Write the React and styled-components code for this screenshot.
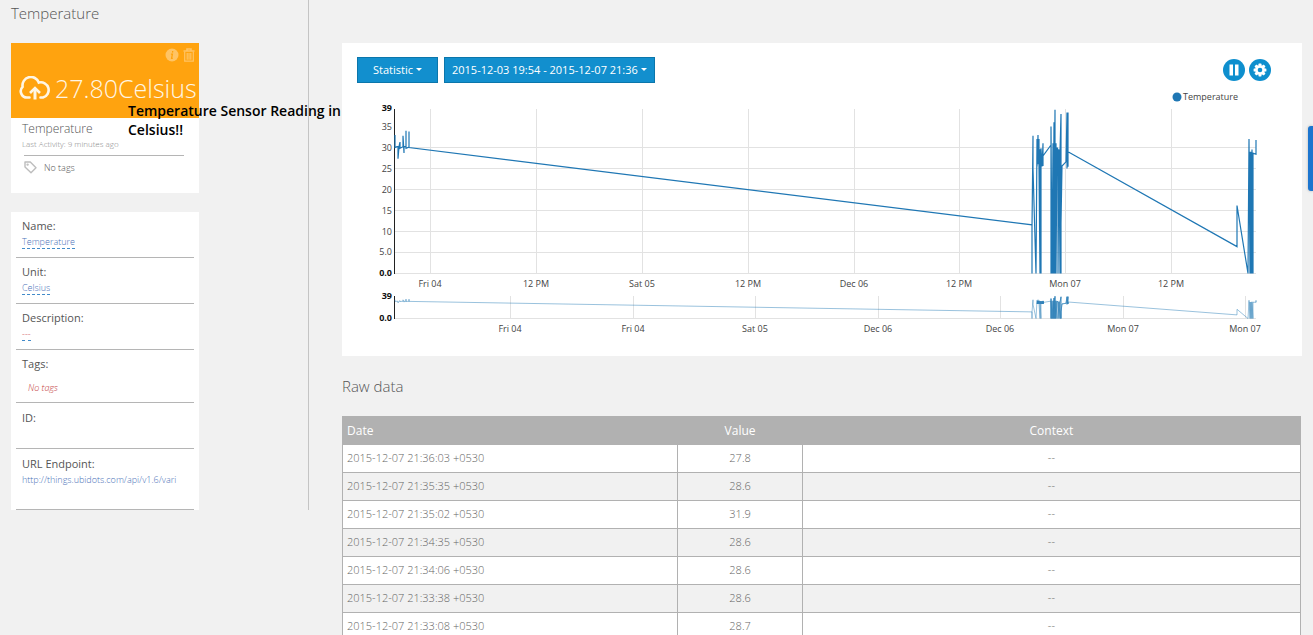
import React from "react";
import styled, { createGlobalStyle } from "styled-components";

const GlobalStyle = createGlobalStyle`
  * {
    box-sizing: border-box;
  }
  body {
    margin: 0;
    background: #f1f1f1;
    font-family: "Open Sans", "Noto Sans", sans-serif;
    font-weight: 300;
    color: #555;
  }
  button {
    font-family: inherit;
    cursor: pointer;
  }
`;

// chart samples: [px from the left of the plot, sensor value]
const samples = [
  [0, 33], [0, 30], [2, 30.2], [3, 30.2], [3, 27.3], [4, 30.2], [5, 31.3], [5, 29.8],
  [8, 30.2], [8, 32.8], [9, 28.7], [9, 30.2], [11, 30.2], [11, 34], [11, 29.8],
  [14, 30.1], [14, 33.8], [14, 30], [637, 11.6],
  [637, 0], [637, 11], [638, 32.8], [638, 25], [641, 0],
  [642, 32], [642, 25.5], [643, 33], [643, 26], [644, 32], [644, 25.5], [645, 0],
  [645, 29.6], [646, 0], [646, 29.8], [647, 25.5], [648, 31], [648, 25.6], [648, 28],
  [656, 30.6], [656, 0], [656, 35], [657, 0], [658, 31], [658, 0],
  [659, 36], [659, 0], [660, 39], [660, 0], [661, 31], [661, 0],
  [662, 30], [663, 29.5], [663, 0], [664, 29.5], [665, 0], [665, 29],
  [666, 38], [666, 0], [666, 12], [667, 25.6], [671, 26.6],
  [672, 38.3], [672, 25], [673, 38.3], [673, 25.4], [673, 29],
  [842, 6.4], [842, 16.2], [853, 0],
  [854, 32], [855, 0], [855, 29], [856, 0], [856, 29], [857, 0], [857, 29.5],
  [858, 0], [858, 28.8], [858, 28.6], [861, 28.4], [861, 31.8], [861, 28.4],
];
const burst = samples.filter(([x]) => x > 655 && x < 674);

const LEFT = 53;
const toLine = (points, bottom, scale) =>
  points.map(([x, v]) => `${x + LEFT},${(bottom - v * scale).toFixed(1)}`).join(" ");

const yTicks = [
  ["39", 22], ["35", 41], ["30", 62], ["25", 83], ["20", 104],
  ["15", 125], ["10", 146], ["5.0", 166], ["0.0", 187],
];
const gridLines = [59.5, 80.5, 101.5, 122.5, 143.5, 164.5, 185.5];
const xTicks = [
  ["Fri 04", 88], ["12 PM", 194], ["Sat 05", 300], ["12 PM", 406],
  ["Dec 06", 512], ["12 PM", 617], ["Mon 07", 723], ["12 PM", 829],
];
const contextTicks = [
  ["Fri 04", 168], ["Fri 04", 291], ["Sat 05", 413], ["Dec 06", 536],
  ["Dec 06", 658], ["Mon 07", 781], ["Mon 07", 903],
];

const rows = [
  ["2015-12-07 21:36:03 +0530", "27.8"],
  ["2015-12-07 21:35:35 +0530", "28.6"],
  ["2015-12-07 21:35:02 +0530", "31.9"],
  ["2015-12-07 21:34:35 +0530", "28.6"],
  ["2015-12-07 21:34:06 +0530", "28.6"],
  ["2015-12-07 21:33:38 +0530", "28.6"],
  ["2015-12-07 21:33:08 +0530", "28.7"],
];

const CloudIcon = () => (
  <svg width="32" height="24" viewBox="0 0 32 24" fill="none" stroke="#fff6e4" strokeWidth="2.6" aria-hidden="true">
    <path d="M10.5 21.5H8.5A6.3 6.3 0 0 1 3.6 10.8A8.4 8.4 0 0 1 19.8 6.6A7.6 7.6 0 1 1 24 21.5H21.5" strokeLinecap="round" />
    <path d="M16 23.5V13" strokeWidth="3" />
    <path d="M11 17L16 12L21 17" />
  </svg>
);

const InfoIcon = () => (
  <svg width="14" height="14" viewBox="0 0 14 14" aria-hidden="true">
    <circle cx="7" cy="7" r="6.5" fill="#ffc465" />
    <path d="M7.7 3L7.5 4.6M5.9 6.1H7.4L6.6 10.4H7.8" stroke="#ffa30f" strokeWidth="1.3" fill="none" />
  </svg>
);

const TrashIcon = () => (
  <svg width="12" height="14" viewBox="0 0 12 14" fill="none" stroke="#ffc465" aria-hidden="true">
    <path d="M0.5 3H11.5M4 2.8V1H8V2.8" strokeWidth="1.6" />
    <path d="M1.7 3.5V13.2H10.3V3.5M4.2 5V11.8M6 5V11.8M7.8 5V11.8" strokeWidth="1.2" />
  </svg>
);

const TagIcon = () => (
  <svg width="13" height="13" viewBox="0 0 13 13" fill="none" stroke="#bdbdbd" strokeWidth="1.4" aria-hidden="true">
    <path d="M1 1H6.3L12 6.7L7 11.8L1 6Z" strokeLinejoin="round" />
    <circle cx="3.6" cy="3.6" r="0.5" />
  </svg>
);

const PauseIcon = () => (
  <svg width="12" height="12" viewBox="0 0 12 12" fill="#fff" aria-hidden="true">
    <path d="M1.5 0.5H5V11.5H1.5ZM7 0.5H10.5V11.5H7Z" />
  </svg>
);

const GearIcon = () => (
  <svg width="14" height="14" viewBox="0 0 14 14" aria-hidden="true">
    <g fill="#fff">
      {[0, 45, 90, 135].map((a) => (
        <rect key={a} x="5.5" y="0.6" width="3" height="12.8" rx="0.6" transform={`rotate(${a} 7 7)`} />
      ))}
      <circle cx="7" cy="7" r="4.8" />
    </g>
    <circle cx="7" cy="7" r="2.3" fill="#0e8fce" />
  </svg>
);

const Chart = () => (
  <ChartSvg viewBox="0 0 960 256" role="img" aria-label="Temperature chart">
    <circle cx="835" cy="9" r="4.5" fill="#1f77b4" />
    <text x="841" y="12">Temperature</text>

    <g stroke="#e2e2e2" shapeRendering="crispEdges">
      {gridLines.map((y) => (
        <line key={y} x1={LEFT} x2="914" y1={y} y2={y} />
      ))}
      {xTicks.map(([, x]) => (
        <line key={x} x1={x + 0.5} x2={x + 0.5} y1="21" y2="186" />
      ))}
      <line x1={LEFT} x2="914" y1="230.5" y2="230.5" />
      {contextTicks.map(([, x]) => (
        <line key={x} x1={x + 0.5} x2={x + 0.5} y1="208" y2="230" />
      ))}
    </g>

    {yTicks.map(([label, y]) => (
      <text key={label} x="50" y={y + 1} textAnchor="end" className={label === "39" || label === "0.0" ? "edge" : ""}>
        {label}
      </text>
    ))}
    {xTicks.map(([label, x]) => (
      <text key={x} x={x} y="199" textAnchor="middle">{label}</text>
    ))}
    <path d="M52.5 21V186M52.5 208V231" stroke="#222" shapeRendering="crispEdges" />
    <polyline points={toLine(samples, 185.5, 4.2)} fill="none" stroke="#1f77b4" strokeWidth="1.2" />

    <text x="50" y="211" textAnchor="end" className="edge">39</text>
    <text x="50" y="233" textAnchor="end" className="edge">0.0</text>
    {contextTicks.map(([label, x]) => (
      <text key={x} x={x} y="244" textAnchor="middle">{label}</text>
    ))}
    <polyline points={toLine(samples, 230.5, 0.57)} fill="none" stroke="#1f77b4" opacity="0.45" />
    <polyline points={toLine(burst, 230.5, 0.57)} fill="none" stroke="#1f77b4" opacity="0.5" />
    <path d="M695 214.5H702" stroke="#1f77b4" strokeWidth="3" opacity="0.8" />
  </ChartSvg>
);

const App = () => {
  return (
    <Page>
      <GlobalStyle />
      <Sidebar>
        <Heading>Temperature</Heading>
        <Card>
          <Reading>
            <CardActions>
              <PlainButton aria-label="Info"><InfoIcon /></PlainButton>
              <PlainButton aria-label="Delete"><TrashIcon /></PlainButton>
            </CardActions>
            <Value>
              <CloudIcon />
              27.80Celsius
            </Value>
          </Reading>
          <Summary>
            <SensorName>Temperature</SensorName>
            <Activity>Last Activity: 9 minutes ago</Activity>
            <TagLine>
              <TagIcon />
              No tags
            </TagLine>
          </Summary>
          <Note>Temperature Sensor Reading in Celsius!!</Note>
        </Card>

        <Details>
          <Field>
            <Label>Name:</Label>
            <EditLink href="#name">Temperature</EditLink>
          </Field>
          <Field>
            <Label>Unit:</Label>
            <EditLink href="#unit">Celsius</EditLink>
          </Field>
          <Field>
            <Label>Description:</Label>
            <EditLink href="#description" $empty>---</EditLink>
          </Field>
          <Field $height={53}>
            <Label>Tags:</Label>
            <NoTags>No tags</NoTags>
          </Field>
          <Field $top={7}>
            <Label>ID:</Label>
          </Field>
          <Field $height={61} $top={7}>
            <Label>URL Endpoint:</Label>
            <Endpoint>http://things.ubidots.com/api/v1.6/vari</Endpoint>
          </Field>
        </Details>
      </Sidebar>

      <Main>
        <ChartCard>
          <Toolbar>
            <BlueButton $pad={15}>Statistic<Caret /></BlueButton>
            <BlueButton $pad={7}>2015-12-03 19:54 - 2015-12-07 21:36<Caret /></BlueButton>
            <RoundButtons>
              <RoundButton aria-label="Pause"><PauseIcon /></RoundButton>
              <RoundButton aria-label="Settings"><GearIcon /></RoundButton>
            </RoundButtons>
          </Toolbar>
          <Chart />
        </ChartCard>

        <Heading>Raw data</Heading>
        <Table>
          <thead>
            <tr>
              <Th $width="35%" $left>Date</Th>
              <Th $width="13%">Value</Th>
              <Th>Context</Th>
            </tr>
          </thead>
          <tbody>
            {rows.map(([date, value]) => (
              <Row key={date}>
                <Td $left>{date}</Td>
                <Td>{value}</Td>
                <Td>--</Td>
              </Row>
            ))}
          </tbody>
        </Table>
      </Main>
      <SideTab aria-label="Open panel" />
    </Page>
  );
};

// page
const Page = styled.div`
  display: flex;
  align-items: flex-start;
  height: 100vh;
  overflow: hidden;
`;
const Sidebar = styled.aside`
  flex: 0 0 309px;
  padding: 3px 0 0 11px;
  border-right: 1px solid #c4c4c4;
`;
const Main = styled.main`
  flex: 1;
  min-width: 0;
  padding: 43px 11px 0 33px;
`;
const Heading = styled.h2`
  margin: 0;
  font-size: 15px;
  line-height: 20px;
  font-weight: 300;
`;

// sensor card
const Card = styled.section`
  position: relative;
  width: 188px;
  margin-top: 20px;
  background: #fff;
`;
const Reading = styled.div`
  height: 75px;
  padding: 5px 4px 0 8px;
  background: #ffa30f;
`;
const CardActions = styled.div`
  display: flex;
  justify-content: flex-end;
  gap: 4px;
`;
const PlainButton = styled.button`
  display: flex;
  padding: 0;
  border: none;
  background: none;
`;
const Value = styled.div`
  display: flex;
  align-items: center;
  gap: 4px;
  margin-top: 9px;
  font-size: 25px;
  line-height: 34px;
  color: #fff6e4;
  white-space: nowrap;

  svg {
    flex: none;
  }
`;
const Summary = styled.div`
  height: 75px;
  padding: 2px 15px 0 11px;
`;
const SensorName = styled.div`
  font-size: 12px;
  line-height: 18px;
`;
const Activity = styled.div`
  padding-bottom: 6px;
  font-size: 8px;
  line-height: 11px;
  color: #888;
`;
const TagLine = styled.div`
  display: flex;
  align-items: center;
  gap: 7px;
  margin-left: 2px;
  padding-top: 5px;
  border-top: 1px solid #b5b5b5;
  font-size: 9px;
  line-height: 12px;
`;
// annotation lying over the card and the gap beside it
const Note = styled.div`
  position: absolute;
  top: 58px;
  left: 117px;
  width: 226px;
  font-size: 14px;
  line-height: 19px;
  font-weight: 600;
  color: #000;
`;

// sensor details
const Details = styled.section`
  width: 188px;
  margin-top: 19px;
  padding: 0 5px;
  background: #fff;
`;
const Field = styled.div`
  height: ${(props) => props.$height || 46}px;
  padding: ${(props) => props.$top || 6}px 6px 0;
  border-bottom: 1px solid #b5b5b5;
  font-size: 9px;
  line-height: 12px;
`;
const Label = styled.div`
  padding-bottom: 2px;
  font-size: 11px;
  line-height: 16px;
  font-weight: 400;
`;
const EditLink = styled.a`
  display: inline-block;
  border-bottom: 1px dashed #428bca;
  color: ${(props) => (props.$empty ? "#c44" : "#4a72b8")};
  text-decoration: none;
`;
const NoTags = styled.em`
  display: block;
  padding: 8px 6px 0;
  color: #c23b3b;
`;
const Endpoint = styled.div`
  color: #4a72b8;
  white-space: nowrap;
`;

// chart
const ChartCard = styled.section`
  margin-bottom: 20px;
  padding-top: 14px;
  background: #fff;
`;
const Toolbar = styled.div`
  display: flex;
  align-items: center;
  gap: 6px;
  padding: 0 31px 0 15px;
`;
const BlueButton = styled.button`
  display: flex;
  align-items: center;
  gap: 3px;
  height: 26px;
  padding: 0 ${(props) => props.$pad}px 1px;
  border: 1px solid #0b76ab;
  background: #128fce;
  color: #fff;
  font-size: 11px;
  white-space: nowrap;
`;
const Caret = styled.span`
  border: 3px solid transparent;
  border-top-color: #fff;
  border-bottom: 0;
`;
const RoundButtons = styled.div`
  display: flex;
  gap: 4px;
  margin-left: auto;
`;
const RoundButton = styled.button`
  display: flex;
  align-items: center;
  justify-content: center;
  width: 22px;
  height: 22px;
  padding: 0;
  border: none;
  border-radius: 50%;
  background: #0e8fce;
`;
const ChartSvg = styled.svg`
  display: block;
  width: 100%;
  margin-top: 5px;
  padding-bottom: 12px;

  text {
    font-size: 9px;
    font-weight: 400;
    fill: #444;
  }
  .edge {
    font-weight: 700;
    fill: #111;
  }
`;

// raw data
const Table = styled.table`
  width: calc(100% - 1px);
  margin-top: 20px;
  border-collapse: collapse;
  table-layout: fixed;
`;
const Th = styled.th`
  width: ${(props) => props.$width || "auto"};
  height: 28px;
  padding: 0 4px 1px;
  border: 1px solid #b1b1b1;
  background: #b1b1b1;
  color: #fff;
  font-size: 12px;
  font-weight: 400;
  text-align: ${(props) => (props.$left ? "left" : "center")};
`;
const Td = styled.td`
  height: 28px;
  padding: 0 4px 2px;
  border: 1px solid #b1b1b1;
  color: #666;
  font-size: 11px;
  text-align: ${(props) => (props.$left ? "left" : "center")};
`;
const Row = styled.tr`
  background: #fff;

  &:nth-child(even) {
    background: #f1f1f1;
  }
`;

// tab stuck to the right edge of the window
const SideTab = styled.button`
  position: fixed;
  top: 126px;
  right: 0;
  width: 5px;
  height: 65px;
  padding: 0;
  border: none;
  border-radius: 3px 0 0 3px;
  background: #1b75cf;
  box-shadow: 0 0 3px rgba(0, 0, 0, 0.25);
`;

export default App;
